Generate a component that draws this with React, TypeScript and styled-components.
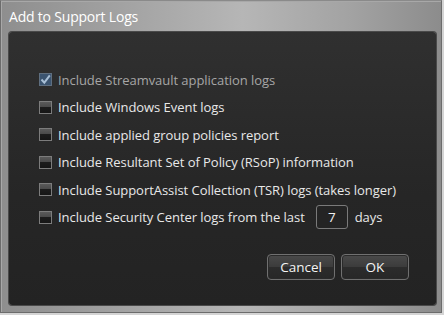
import React from 'react';
import styled, { createGlobalStyle } from 'styled-components';

const GlobalStyle = createGlobalStyle`
  html, body {
    margin: 0;
    padding: 0;
    background: #d4d4d4;
  }
  body {
    font-family: 'Open Sans', 'Noto Sans', sans-serif;
  }
`;

const Window = styled.div`
  width: 442px;
  height: 313px;
  box-sizing: border-box;
  border: 1px solid #6c6c6c;
  border-top-color: #8a8a8a;
  background: linear-gradient(
    90deg,
    #8e8e8e 0%,
    #a4a4a4 30%,
    #b6b6b6 55%,
    #a2a2a2 80%,
    #8c8c8c 100%
  );
  box-shadow: inset 1px 1px 0 #a8a8a8;
  display: flex;
  flex-direction: column;
`;

const TitleBar = styled.div`
  height: 31px;
  flex: none;
  display: flex;
  align-items: center;
  padding-left: 8px;
  color: #ffffff;
  font-size: 14px;
  letter-spacing: -0.2px;
`;

const Panel = styled.div`
  margin: 0 5px 7px 8px;
  flex: 1;
  border-radius: 3px;
  background: linear-gradient(180deg, #303030 0%, #262626 60%, #232323 100%);
  box-shadow: 0 0 0 1px #4a4a4a;
  padding: 34px 27px 0 30px;
  display: flex;
  flex-direction: column;
`;

const OptionList = styled.div`
  display: flex;
  flex-direction: column;
`;

const Row = styled.label<{ $disabled?: boolean }>`
  height: 27.5px;
  display: flex;
  align-items: center;
  gap: 6px;
  font-size: 13px;
  letter-spacing: -0.05px;
  color: ${(p) => (p.$disabled ? '#a6a6a6' : '#e8e8e8')};
  white-space: nowrap;
`;

const Box = styled.span<{ $checked?: boolean }>`
  width: 13px;
  height: 13px;
  flex: none;
  box-sizing: border-box;
  border: 1px solid ${(p) => (p.$checked ? '#5f6f80' : '#7c7c7c')};
  background: ${(p) =>
    p.$checked
      ? '#3b5470'
      : 'linear-gradient(180deg, #5a5a5a 0%, #4a4a4a 45%, #1c1c1c 50%, #161616 100%)'};
  display: flex;
  align-items: center;
  justify-content: center;
`;

const DaysInput = styled.span`
  width: 32px;
  height: 24px;
  box-sizing: border-box;
  margin: 0 1px 0 5px;
  border: 1px solid #7a7a7a;
  border-radius: 3px;
  background: #242424;
  display: inline-flex;
  align-items: center;
  justify-content: center;
  color: #f0f0f0;
  font-size: 13.5px;
`;

const ButtonRow = styled.div`
  display: flex;
  justify-content: flex-end;
  gap: 6px;
  margin-top: 23px;
`;

const Button = styled.button`
  width: 68px;
  height: 26px;
  box-sizing: border-box;
  border: 1px solid #707070;
  border-radius: 4px;
  background: linear-gradient(180deg, #4a4a4a 0%, #3c3c3c 48%, #2c2c2c 52%, #272727 100%);
  color: #f4f4f4;
  font-family: 'Open Sans', 'Noto Sans', sans-serif;
  font-size: 13.5px;
  padding: 0;
  box-shadow: inset 0 0 0 1px #2a2a2a;
`;

const Check = () => (
  <svg width="11" height="11" viewBox="0 0 11 11">
    <path d="M1.5 5.5 L4.3 8.6 L9.8 1.4" fill="none" stroke="#a8bfd6" strokeWidth="2" />
  </svg>
);

const options = [
  { label: 'Include Windows Event logs' },
  { label: 'Include applied group policies report' },
  { label: 'Include Resultant Set of Policy (RSoP) information' },
  { label: 'Include SupportAssist Collection (TSR) logs (takes longer)' },
];

export default function App() {
  return (
    <>
      <GlobalStyle />
      <Window>
        <TitleBar>Add to Support Logs</TitleBar>
        <Panel>
          <OptionList>
            <Row $disabled>
              <Box $checked>
                <Check />
              </Box>
              Include Streamvault application logs
            </Row>
            {options.map((o) => (
              <Row key={o.label}>
                <Box />
                {o.label}
              </Row>
            ))}
            <Row>
              <Box />
              Include Security Center logs from the last
              <DaysInput>7</DaysInput>
              days
            </Row>
          </OptionList>
          <ButtonRow>
            <Button>Cancel</Button>
            <Button>OK</Button>
          </ButtonRow>
        </Panel>
      </Window>
    </>
  );
}
